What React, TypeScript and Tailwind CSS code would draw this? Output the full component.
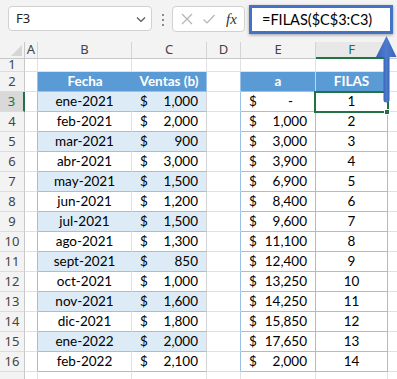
import React from "react";

const W = ["w-[25px]", "w-[13px]", "w-[94px]", "w-[75px]", "w-[34px]", "w-[75px]", "w-[72px]", "flex-1"];

const B = ["ene-2021","feb-2021","mar-2021","abr-2021","may-2021","jun-2021","jul-2021","ago-2021","sept-2021","oct-2021","nov-2021","dic-2021","ene-2022","feb-2022"];
const C = ["1,000","2,000","900","3,000","1,500","1,200","1,500","1,300","850","1,000","1,600","1,800","2,000","2,100"];
const E = ["-","1,000","3,000","3,900","6,900","8,400","9,600","11,100","12,400","13,250","14,250","15,850","17,650","2,000"];

const cellFont = { fontFamily: "Lato, 'Liberation Sans', sans-serif" };

function Acct({ v, dash }: { v: string; dash?: boolean }) {
  return (
    <div className="flex w-full items-center justify-between pl-[8px] pr-[8px]">
      <span>$</span>
      <span className={dash ? "pr-[14px]" : ""}>{v}</span>
    </div>
  );
}

export default function App() {
  const rows: React.ReactNode[] = [];

  // row 1
  rows.push(
    <div key="r1" className="flex h-[13px]">
      <div className={`${W[0]} shrink-0 border-r border-b border-r-[#c8c8c8] border-b-[#dcdcdc] bg-[#f3f3f3] text-[#444] flex items-center justify-center text-[13px]`}>1</div>
      <div className={`${W[1]} shrink-0 border-r border-b border-[#e1e1e1]`} />
      <div className={`${W[2]} shrink-0 border-r border-b border-[#e1e1e1]`} />
      <div className={`${W[3]} shrink-0 border-r border-b border-[#e1e1e1]`} />
      <div className={`${W[4]} shrink-0 border-r border-b border-[#e1e1e1]`} />
      <div className={`${W[5]} shrink-0 border-r border-b border-[#e1e1e1]`} />
      <div className={`${W[6]} shrink-0 border-r border-b border-[#e1e1e1]`} />
      <div className={`${W[7]} border-b border-[#e1e1e1]`} />
    </div>
  );

  // row 2 header
  rows.push(
    <div key="r2" className="flex h-[20px]">
      <div className={`${W[0]} shrink-0 border-r border-b border-r-[#c8c8c8] border-b-[#dcdcdc] bg-[#f3f3f3] text-[#444] flex items-center justify-center text-[13px]`}>2</div>
      <div className={`${W[1]} shrink-0 border-r border-b border-r-[#9bc2e6] border-b-[#e1e1e1]`} />
      <div className={`${W[2]} shrink-0 border-b border-[#9bc2e6] bg-[#5b9bd5] text-white font-bold flex items-center justify-center text-[13.5px]`} style={cellFont}>Fecha</div>
      <div className={`${W[3]} shrink-0 border-r border-b border-r-[#9bc2e6] border-b-[#9bc2e6] bg-[#5b9bd5] text-white font-bold flex items-center justify-center text-[13.5px]`} style={cellFont}>Ventas (b)</div>
      <div className={`${W[4]} shrink-0 border-r border-b border-r-[#9bc2e6] border-b-[#e1e1e1]`} />
      <div className={`${W[5]} shrink-0 border-r border-b border-r-[#bcd6ee] border-b-[#9bc2e6] bg-[#5b9bd5] text-white font-bold flex items-center justify-center text-[13.5px]`} style={cellFont}>a</div>
      <div className={`${W[6]} shrink-0 border-r border-b border-[#9bc2e6] bg-[#5b9bd5] text-white font-bold flex items-center justify-center text-[13.5px]`} style={cellFont}>FILAS</div>
      <div className={`${W[7]} border-b border-[#e1e1e1]`} />
    </div>
  );

  for (let i = 0; i < 14; i++) {
    const r = i + 3;
    const band = r % 2 === 1;
    const sel = r === 3;
    rows.push(
      <div key={`r${r}`} className="flex h-[20px] text-[13.5px] text-black" style={cellFont}>
        <div
          className={`${W[0]} shrink-0 border-b border-b-[#dcdcdc] flex items-center justify-center text-[13px] ${sel ? "bg-[#d9d9d9] text-[#217346] border-r-2 border-r-[#217346]" : "bg-[#f3f3f3] text-[#444] border-r border-r-[#c8c8c8]"}`}
          style={{ fontFamily: "'Noto Sans', sans-serif" }}
        >
          {r}
        </div>
        <div className={`${W[1]} shrink-0 border-r border-b border-r-[#9bc2e6] border-b-[#e1e1e1]`} />
        <div className={`${W[2]} shrink-0 border-r border-b border-b-[#9bc2e6] flex items-center justify-center ${band ? "bg-[#ddebf7] border-r-[#ddebf7]" : "border-r-[#e1e1e1]"}`}>{B[i]}</div>
        <div className={`${W[3]} shrink-0 border-r border-b border-b-[#9bc2e6] flex items-center ${band ? "bg-[#ddebf7] border-r-[#d4d4d4]" : "border-r-[#d4d4d4]"}`}>
          <Acct v={C[i]} />
        </div>
        <div className={`${W[4]} shrink-0 border-r border-b border-r-[#9bc2e6] border-b-[#e1e1e1]`} />
        <div className={`${W[5]} shrink-0 border-r border-b border-[#9bc2e6] flex items-center`}>
          <Acct v={E[i]} dash={E[i] === "-"} />
        </div>
        <div className={`${W[6]} shrink-0 border-r border-b border-[#9bc2e6] flex items-center justify-center`}>{r - 2}</div>
        <div className={`${W[7]} border-b border-[#e1e1e1]`} />
      </div>
    );
  }

  rows.push(
    <div key="r17" className="flex h-[20px]">
      <div className={`${W[0]} shrink-0 border-r border-b border-r-[#c8c8c8] border-b-[#dcdcdc] bg-[#f3f3f3]`} />
      <div className={`${W[1]} shrink-0 border-r border-b border-[#e1e1e1]`} />
      <div className={`${W[2]} shrink-0 border-r border-b border-[#e1e1e1]`} />
      <div className={`${W[3]} shrink-0 border-r border-b border-[#e1e1e1]`} />
      <div className={`${W[4]} shrink-0 border-r border-b border-[#e1e1e1]`} />
      <div className={`${W[5]} shrink-0 border-r border-b border-[#e1e1e1]`} />
      <div className={`${W[6]} shrink-0 border-r border-b border-[#e1e1e1]`} />
      <div className={`${W[7]} border-b border-[#e1e1e1]`} />
    </div>
  );

  const hdrs = ["A", "B", "C", "D", "E", "F"];

  return (
    <div className="relative h-[379px] w-[397px] overflow-hidden bg-white" style={{ fontFamily: "'Noto Sans', sans-serif" }}>
      {/* formula bar */}
      <div className="flex h-[42px] items-start bg-[#f3f3f3] pt-[6px]">
        <div className="ml-[8px] flex h-[25px] w-[144px] items-center justify-between rounded-[4px] border border-[#d1d1d1] bg-white pl-[7px] pr-[4px] text-[13px] text-[#222]">
          <span>F3</span>
          <svg width="12" height="12" viewBox="0 0 12 12"><path d="M2 4.5 L6 8.5 L10 4.5" fill="none" stroke="#555" strokeWidth="1.2" /></svg>
        </div>
        <div className="ml-[10px] mt-[8px] flex flex-col gap-[3px]">
          <div className="h-[2px] w-[2px] bg-[#8a8a8a]" />
          <div className="h-[2px] w-[2px] bg-[#8a8a8a]" />
          <div className="h-[2px] w-[2px] bg-[#8a8a8a]" />
        </div>
        <div className="ml-[8px] flex h-[26px] w-[73px] items-center rounded-[4px] border border-[#d1d1d1] bg-white">
          <svg className="ml-[7px]" width="14" height="14" viewBox="0 0 14 14"><path d="M2 2 L12 12 M12 2 L2 12" stroke="#b4b4b4" strokeWidth="1.2" /></svg>
          <svg className="ml-[8px]" width="14" height="14" viewBox="0 0 14 14"><path d="M1.5 7.5 L5 11 L12.5 3" fill="none" stroke="#b4b4b4" strokeWidth="1.2" /></svg>
          <span className="ml-[10px] text-[15px] italic text-[#333]" style={{ fontFamily: "'Liberation Serif', serif" }}>fx</span>
        </div>
        <div className="ml-[4px] -mt-[1px] flex h-[29px] w-[144px] items-center border-[3px] border-[#4472c4] bg-white pl-[10px] text-[14.5px] text-black shadow-[0_1px_3px_rgba(0,0,0,0.35)]" style={cellFont}>
          =FILAS($C$3:C3)
        </div>
      </div>

      {/* column headers */}
      <div className="flex h-[17px] bg-[#f3f3f3] text-[13px] text-[#444]">
        <div className={`${W[0]} relative shrink-0 border-r border-b border-[#c8c8c8]`}>
          <svg className="absolute right-[2px] bottom-[2px]" width="11" height="11" viewBox="0 0 11 11"><path d="M11 0 L11 11 L0 11 Z" fill="#d6d6d6" /></svg>
        </div>
        {hdrs.map((h, i) => (
          <div
            key={h}
            className={`${W[i + 1]} shrink-0 flex items-center justify-center border-r border-r-[#d4d4d4] ${h === "F" ? "border-b-2 border-b-[#217346] text-[#217346] bg-[#e8e8e8]" : "border-b border-b-[#c8c8c8]"}`}
          >
            {h}
          </div>
        ))}
        <div className={`${W[7]} border-b border-b-[#c8c8c8]`} />
      </div>

      {rows}

      {/* selection */}
      <div className="absolute left-[314px] top-[91px] h-[22px] w-[75px] border-2 border-[#217346]" />
      <div className="absolute left-[384px] top-[109px] h-[6px] w-[6px] border border-white bg-[#217346]" />

      {/* arrow */}
      <svg className="absolute left-[372px] top-[33px]" width="25" height="72" viewBox="0 0 25 72">
        <defs>
          <linearGradient id="ag" x1="0" x2="1" y1="0" y2="0">
            <stop offset="0" stopColor="#3a64b4" />
            <stop offset="0.5" stopColor="#4c7bd0" />
            <stop offset="1" stopColor="#3a64b4" />
          </linearGradient>
        </defs>
        <path d="M11.5 22 L17.5 22 L17.5 67 Q17.5 69.5 14.5 69.5 Q11.5 69.5 11.5 67 Z" fill="url(#ag)" />
        <path d="M14.5 3 L24.5 24 L4 24 Z" fill="url(#ag)" />
      </svg>
    </div>
  );
}
